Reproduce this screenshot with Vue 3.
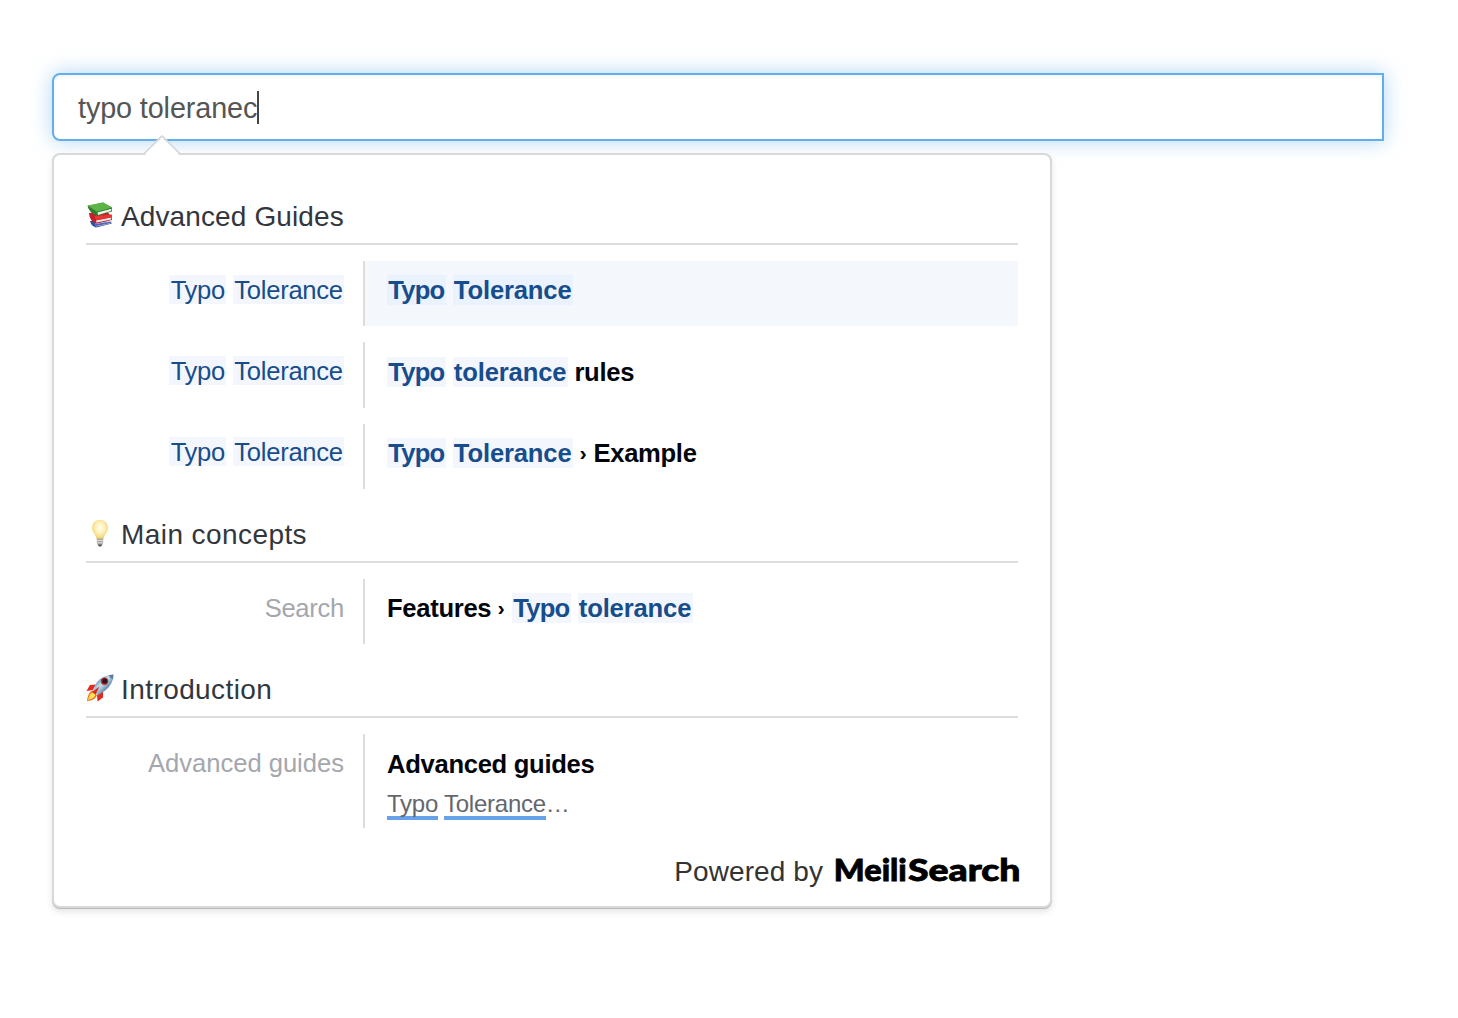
<script setup>
const groups = [
  {
    icon: 'books',
    title: 'Advanced Guides',
    rows: [
      {
        sub: [{ t: 'Typo', h: true }, { t: ' ' }, { t: 'Tolerance', h: true }],
        title: [{ t: 'Typo', h: true }, { t: ' ' }, { t: 'Tolerance', h: true }],
        active: true,
      },
      {
        sub: [{ t: 'Typo', h: true }, { t: ' ' }, { t: 'Tolerance', h: true }],
        title: [{ t: 'Typo', h: true }, { t: ' ' }, { t: 'tolerance', h: true }, { t: ' rules' }],
      },
      {
        sub: [{ t: 'Typo', h: true }, { t: ' ' }, { t: 'Tolerance', h: true }],
        title: [{ t: 'Typo', h: true }, { t: ' ' }, { t: 'Tolerance', h: true }, { t: ' ' }, { t: '›', s: true }, { t: ' Example' }],
      },
    ],
  },
  {
    icon: 'bulb',
    title: 'Main concepts',
    rows: [
      {
        sub: [{ t: 'Search' }],
        title: [{ t: 'Features ' }, { t: '›', s: true }, { t: ' ' }, { t: 'Typo', h: true }, { t: ' ' }, { t: 'tolerance', h: true }],
      },
    ],
  },
  {
    icon: 'rocket',
    title: 'Introduction',
    rows: [
      {
        sub: [{ t: 'Advanced guides' }],
        title: [{ t: 'Advanced guides' }],
        text: [{ t: 'Typo', h: true }, { t: ' ' }, { t: 'Tolerance', h: true }, { t: '…' }],
      },
    ],
  },
]
</script>

<template>
  <main class="page">
    <div class="search"><span class="query">typo toleranec</span><i class="caret"></i></div>
    <section class="dropdown">
      <div class="arrow"></div>
      <div v-for="g in groups" :key="g.title" class="group" :class="g.icon">
        <h2 class="heading">
          <svg v-if="g.icon === 'books'" class="emoji" viewBox="0 0 28 28">
            <path d="M4 20 L21 18.500 L26 22.500 L10 26.500 Q5 25 4 20Z" fill="#314f9f" />
            <path d="M9 22.500 L24 19.500 L24.500 22.500 L10 25.500Z" fill="#d5d7e6" />
            <path d="M9 23 L25.500 20.500 L25 22 L10 25Z" fill="#4a66b5" />
            <path d="M3 12 L20 10 L26 15.500 L26 19 L10 22.500 Q3.500 20 3 12Z" fill="#c3202b" />
            <path d="M10 19.500 L25.500 16.500 L25 18.500 L10.500 21.500Z" fill="#f0ecec" />
            <path d="M8.500 15 L26 13.500 L26 16 L10 19.200Z" fill="#e93434" />
            <path d="M1.500 5 L17 1.500 L26 6.500 L26 10.500 L11 15 Q3 11.500 1.500 5Z" fill="#2f7d2e" />
            <path d="M11.500 11.500 L25.500 7.800 L25 10 L12 14Z" fill="#f1f4ed" />
            <path d="M1.500 4.500 L17 1.500 L26 6.500 L11 10.800Z" fill="#5cb449" />
          </svg>
          <svg v-else-if="g.icon === 'bulb'" class="emoji" viewBox="0 0 28 28">
            <defs>
              <radialGradient id="glow" cx="50%" cy="42%" r="58%">
                <stop offset="0" stop-color="#fffdf0" />
                <stop offset=".5" stop-color="#fdf0b8" />
                <stop offset="1" stop-color="#f1cf6c" />
              </radialGradient>
            </defs>
            <path d="M14 .8 C8.800 .8 6 4.600 6 9 C6 13.500 10 15.500 10.500 20 H17.500 C18 15.500 22 13.500 22 9 C22 4.600 19.200 .8 14 .8Z" fill="url(#glow)" />
            <path d="M10.800 19.500 H17.200 V24 L15.800 27 H12.200 L10.800 24Z" fill="#aaa9a6" />
            <path d="M11 21.500 H17 M11 23.800 H17" stroke="#e4e3df" stroke-width=".8" />
            <path d="M12 25.500 H16 L15 27.500 H13Z" fill="#55534f" />
          </svg>
          <svg v-else class="emoji" viewBox="0 0 28 28">
            <defs>
              <linearGradient id="hull" x1="0" y1="0" x2="1" y2="1">
                <stop offset=".2" stop-color="#4f86ad" />
                <stop offset=".45" stop-color="#c6e0ef" />
                <stop offset=".75" stop-color="#4b6f92" />
              </linearGradient>
            </defs>
            <path d="M10 10.500 L4 11 L.5 17 L7.500 16Z" fill="#e3281e" />
            <path d="M17 16.500 L17 23.500 L11.500 27.500 L11 20.500Z" fill="#e3281e" />
            <path d="M6.500 16.500 Q1.500 19 1 27 Q8.500 26.500 11 21.500Z" fill="#ef6a1d" />
            <path d="M7 18 Q3 20 2 26 Q8 25 9.500 21Z" fill="#ffe252" />
            <path d="M27.500 .5 Q18 .5 11 8 L6.500 16 L11.500 21.500 L19 16.800 Q27.500 10 27.500 .5Z" fill="url(#hull)" />
            <path d="M27.500 .5 L22.500 1.300 Q24 4.500 27 5.500Z" fill="#5f7f9c" />
            <path d="M6 18 L13.500 12.500 L9.500 20.500Z" fill="#d9261f" />
            <circle cx="18.500" cy="7.300" r="3.700" fill="#c02a25" />
            <circle cx="18.800" cy="7.100" r="2.500" fill="#24161c" />
          </svg>
          <span>{{ g.title }}</span>
        </h2>
        <div v-for="(r, i) in g.rows" :key="i" class="row" :class="{ active: r.active }">
          <div class="sub"><span v-for="(p, k) in r.sub" :key="k" :class="{ hl: p.h }">{{ p.t }}</span></div>
          <div class="content">
            <div class="title"><span v-for="(p, k) in r.title" :key="k" :class="{ hl: p.h, short: p.t === 'Typo', sep: p.s }">{{ p.t }}</span></div>
            <div v-if="r.text" class="text"><span v-for="(p, k) in r.text" :key="k" :class="{ ul: p.h }">{{ p.t }}</span></div>
          </div>
        </div>
      </div>
      <footer class="footer">
        <span class="powered">Powered by</span>
        <svg class="logo" width="186" height="40" viewBox="0 0 186 40">
          <text y="26"><tspan x="-0.200" textLength="73" lengthAdjust="spacingAndGlyphs">Meili</tspan><tspan x="74" textLength="112.500" lengthAdjust="spacingAndGlyphs">Search</tspan></text>
        </svg>
      </footer>
    </section>
  </main>
</template>

<style>
body {
  background: #fff;
}
</style>

<style scoped>
.page {
  box-sizing: border-box;
  height: 1018px;
  padding: 73px 74px 0 52px;
  font-family: "Liberation Sans", Arial, sans-serif;
  overflow: hidden;
}
.search {
  box-sizing: border-box;
  height: 68px;
  border: 2px solid #62aeea;
  border-radius: 8px 0 0 8px;
  padding-left: 24px;
  display: flex;
  align-items: center;
  box-shadow: 0 0 20px rgba(98, 174, 234, 0.5), inset 0 2px 4px rgba(0, 0, 0, 0.05);
  font-size: 28.8px;
  color: #555;
}
.query {
  padding-top: 2px;
  letter-spacing: -0.12px;
  line-height: 34px;
}
.caret {
  width: 2px;
  height: 33px;
  background: #444;
}
.dropdown {
  position: relative;
  box-sizing: border-box;
  width: 1000px;
  height: 755px;
  margin-top: 12px;
  padding: 16px 32px 0;
  border: 2px solid #d9d9d9;
  border-radius: 8px;
  background: #fff;
  box-shadow: 0 1px 0 rgba(0, 0, 0, 0.2), 0 4px 6px rgba(0, 0, 0, 0.1);
}
.arrow {
  position: absolute;
  left: 94px;
  top: -15px;
  box-sizing: border-box;
  width: 28px;
  height: 28px;
  border: 2px solid #d9d9d9;
  border-right-color: transparent;
  border-bottom-color: transparent;
  border-radius: 3px 0 0 0;
  background: #fff;
  background-clip: padding-box;
  transform: rotate(45deg);
  clip-path: polygon(0 0, 100% 0, 100% 4px, 4px 100%, 0 100%);
}
.heading {
  box-sizing: border-box;
  height: 74px;
  margin: 0;
  padding-top: 29px;
  border-bottom: 2px solid #ddd;
  display: flex;
  align-items: flex-start;
  gap: 7px;
  font-size: 28px;
  font-weight: 400;
  line-height: 34px;
  letter-spacing: 0.42px;
  color: #33363d;
}
.books .heading {
  letter-spacing: 0.12px;
}
.emoji {
  width: 28px;
  height: 28px;
  margin-top: 1px;
}
.row {
  display: flex;
  min-height: 65px;
  margin-top: 16px;
}
.row + .row {
  min-height: 65.5px;
}
.sub {
  box-sizing: border-box;
  width: 277px;
  padding: 14px 19px 0 0;
  text-align: right;
  font-size: 25.6px;
  line-height: 30px;
  letter-spacing: -0.29px;
  color: #a4a7ae;
  white-space: pre;
}
.row:nth-child(4) .sub {
  padding-top: 13.4px;
}
.rocket .sub {
  letter-spacing: -0.02px;
}
.content {
  box-sizing: border-box;
  flex: 1;
  padding: 14px 0 0 22px;
  border-left: 2px solid #ddd;
  white-space: pre;
}
.row:nth-child(3) .content {
  padding-top: 15px;
}
.active .content {
  background: #f4f8fd;
}
.title {
  font-size: 25.6px;
  font-weight: 700;
  line-height: 30px;
  letter-spacing: -0.3px;
  color: #02060c;
}
.rocket .title {
  padding-top: 1px;
}
.hl {
  padding: 1px 1.28px 0;
  color: #174d8c;
  background: #f3f7fd;
}
.title .hl {
  padding: 1px 1.28px;
  letter-spacing: -0.15px;
}
.title .hl.short {
  letter-spacing: -0.75px;
}
.sep {
  display: inline-block;
  width: 7px;
  transform: translateX(-1px) scale(0.85, 0.78);
}
.active .title .hl {
  background: #eaf3fd;
}
.text {
  padding: 10px 0 9px;
  font-size: 24px;
  line-height: 30px;
  letter-spacing: -0.25px;
  color: #63676d;
}
.ul {
  padding-bottom: 3px;
  box-shadow: inset 0 -4px 0 #67a2e8;
}
.footer {
  display: flex;
  justify-content: flex-end;
  margin: 27px -2px 0 0;
  height: 34px;
}
.powered {
  margin-right: 11px;
  font-size: 28px;
  line-height: 34px;
  letter-spacing: 0.08px;
  color: #333;
}
.logo {
  display: block;
  overflow: visible;
}
.logo text {
  font-family: Lato, sans-serif;
  font-weight: 900;
  font-size: 30.5px;
  fill: #000;
  stroke: #000;
  stroke-width: 0.8px;
}
</style>
